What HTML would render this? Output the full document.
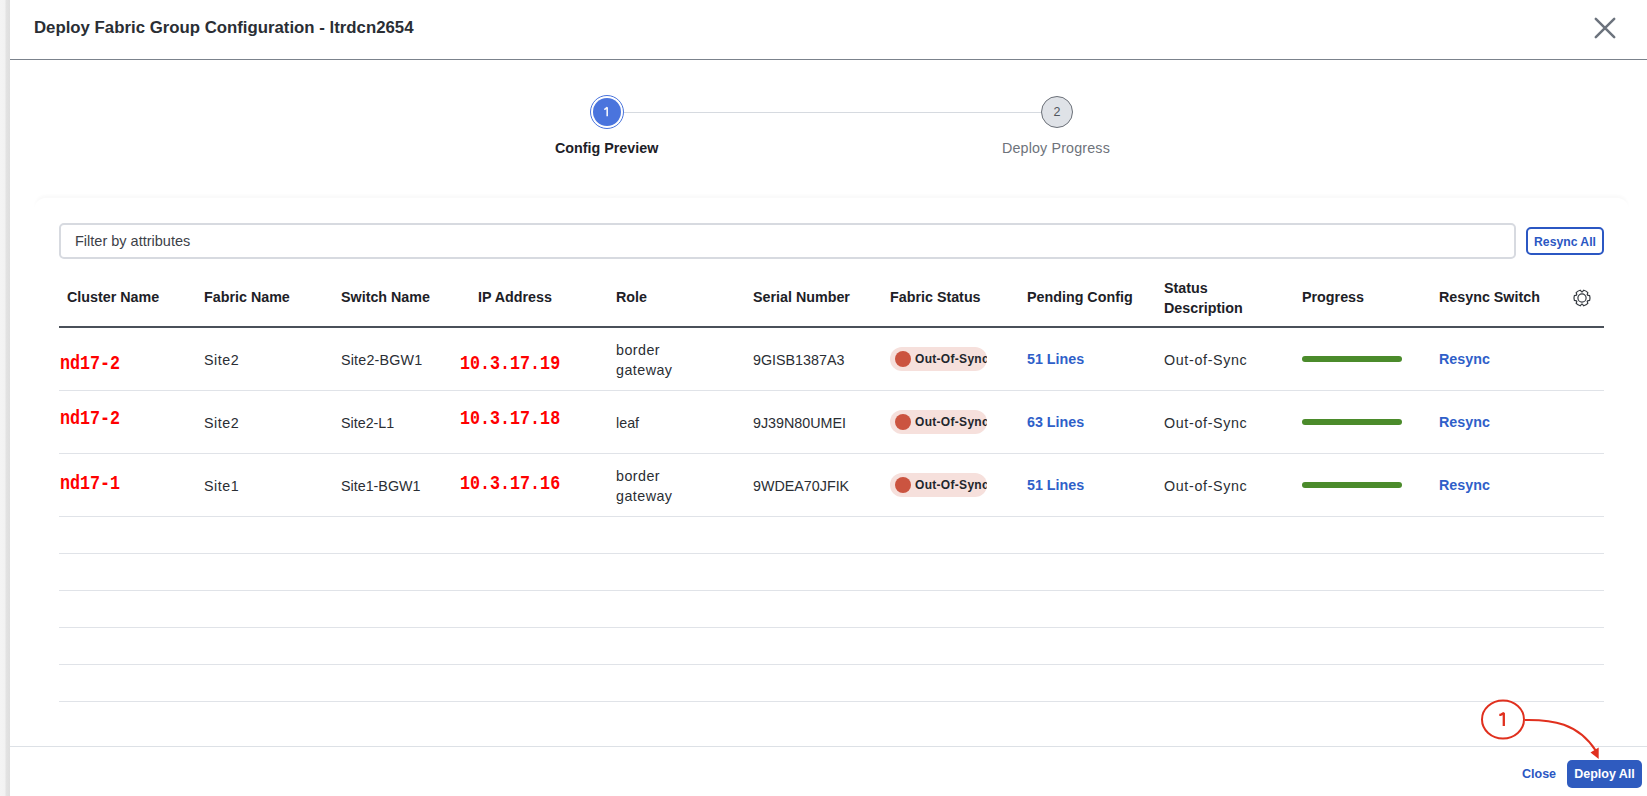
<!DOCTYPE html>
<html><head><meta charset="utf-8">
<style>
*{box-sizing:border-box;margin:0;padding:0}
html,body{width:1647px;height:796px;overflow:hidden;background:#fff;font-family:"Liberation Sans",sans-serif;color:#1d2127}
.strip{position:absolute;left:0;top:0;width:10px;height:796px;background:linear-gradient(to right,#f4f4f4 0,#f2f2f2 5px,#e3e3e3 6px,#dedede 10px)}
.modal{position:absolute;left:10px;top:0;width:1637px;height:796px;background:#fff}
.abs{position:absolute;white-space:nowrap}
.title{left:34px;top:18px;font-size:16.8px;font-weight:bold;color:#2a2e34}
.hline{position:absolute;left:10px;width:1637px;height:1px}
.card{position:absolute;left:34px;top:198px;width:1595px;height:60px;border-radius:12px 12px 0 0;box-shadow:0 -4px 3px -1px rgba(0,0,0,0.022)}
.filter{position:absolute;left:59px;top:223px;width:1457px;height:36px;border:2px solid #d7dae0;border-radius:5px}
.filter span{position:absolute;left:14px;top:8px;font-size:14.5px;color:#3c4148}
.btn-outline{position:absolute;left:1526px;top:227px;width:78px;height:28px;border:2px solid #2b57c3;border-radius:5px;color:#2b57c3;font-weight:bold;font-size:12.2px;text-align:center;line-height:26px}
.th{position:absolute;font-size:14.3px;font-weight:bold;color:#1d2127;white-space:nowrap}
.td{position:absolute;font-size:14.3px;color:#2a2e34;white-space:nowrap}
.mono{position:absolute;font-family:"Liberation Mono",monospace;font-weight:bold;color:#ff0000;font-size:16.7px;transform-origin:left top;transform:scaleY(1.22);white-space:nowrap}
.link{position:absolute;font-size:14.3px;font-weight:bold;color:#2f5fc9;white-space:nowrap}
.pill{position:absolute;left:890px;width:97px;height:24px;border-radius:12px;background:#f6e0dc;overflow:hidden}
.pill i{position:absolute;left:5px;top:4px;width:16px;height:16px;border-radius:50%;background:#cb5440}
.pill b{position:absolute;left:25px;top:4.5px;font-size:12px;color:#22262c;letter-spacing:0.3px;white-space:nowrap}
.bar{position:absolute;left:1302px;width:100px;height:6px;border-radius:3px;background:#4b8b2b}
.rowline{position:absolute;left:59px;width:1545px;height:1px;background:#e0e3e8}
</style></head><body>
<div class="strip"></div>
<div class="modal"></div>
<div class="abs title">Deploy Fabric Group Configuration - ltrdcn2654</div>
<svg class="abs" style="left:1590px;top:13px" width="30" height="30" viewBox="0 0 30 30"><path d="M5.8 5.8 L24.2 24.2 M24.2 5.8 L5.8 24.2" stroke="#6c737d" stroke-width="2.5" stroke-linecap="round"/></svg>
<div class="hline" style="top:59px;background:#7b828c"></div>

<!-- stepper -->
<div style="position:absolute;left:624px;top:112px;width:417px;height:1px;background:#d6dae0"></div>
<div style="position:absolute;left:590px;top:95px;width:34px;height:34px;border-radius:50%;border:1.5px solid #4a74dd;background:#fff"></div>
<div style="position:absolute;left:593px;top:98px;width:28px;height:28px;border-radius:50%;background:#4a74dd"></div>
<svg class="abs" style="left:592px;top:97px" width="30" height="30" viewBox="592 97 30 30"><path d="M607.2 116.2 V107.5 L605 109.2 H604.2" fill="none" stroke="#f2f4fb" stroke-width="1.6" stroke-linejoin="bevel"/></svg>
<div style="position:absolute;left:1041px;top:96px;width:32px;height:32px;border-radius:50%;border:1.3px solid #6b7078;background:#dfe2e7;color:#50555c;font-size:12.5px;text-align:center;line-height:31px">2</div>
<div class="abs" style="left:555px;top:140px;font-size:14.3px;font-weight:bold;color:#1d2127">Config Preview</div>
<div class="abs" style="left:1002px;top:140px;font-size:14.3px;color:#6e737b;letter-spacing:0.15px">Deploy Progress</div>

<div class="card"></div>
<div class="filter"><span>Filter by attributes</span></div>
<div class="btn-outline">Resync All</div>

<!-- header -->
<div class="th" style="left:67px;top:289px">Cluster Name</div>
<div class="th" style="left:204px;top:289px">Fabric Name</div>
<div class="th" style="left:341px;top:289px">Switch Name</div>
<div class="th" style="left:478px;top:289px">IP Address</div>
<div class="th" style="left:616px;top:289px">Role</div>
<div class="th" style="left:753px;top:289px">Serial Number</div>
<div class="th" style="left:890px;top:289px">Fabric Status</div>
<div class="th" style="left:1027px;top:289px">Pending Config</div>
<div class="th" style="left:1164px;top:277.5px;line-height:20px">Status<br>Description</div>
<div class="th" style="left:1302px;top:289px">Progress</div>
<div class="th" style="left:1439px;top:289px">Resync Switch</div>
<svg class="abs" style="left:1572.5px;top:288.6px" width="18" height="18" viewBox="0 0 18 18"><path fill="none" stroke="#33383f" stroke-width="1.2" stroke-linejoin="round" d="M14.52 6.19L16.65 6.66A8.00 8.00 0 0 1 16.65 11.34L14.52 11.81A6.20 6.20 0 0 1 14.20 12.38L14.85 14.46A8.00 8.00 0 0 1 10.80 16.79L9.32 15.19A6.20 6.20 0 0 1 8.68 15.19L7.20 16.79A8.00 8.00 0 0 1 3.15 14.46L3.80 12.38A6.20 6.20 0 0 1 3.48 11.81L1.35 11.34A8.00 8.00 0 0 1 1.35 6.66L3.48 6.19A6.20 6.20 0 0 1 3.80 5.62L3.15 3.54A8.00 8.00 0 0 1 7.20 1.21L8.68 2.81A6.20 6.20 0 0 1 9.32 2.81L10.80 1.21A8.00 8.00 0 0 1 14.85 3.54L14.20 5.62A6.20 6.20 0 0 1 14.52 6.19 Z"/><circle cx="9" cy="9" r="4.1" fill="none" stroke="#33383f" stroke-width="1.2"/></svg>
<div style="position:absolute;left:59px;top:326px;width:1545px;height:2px;background:#4a5059"></div>

<!-- rows -->
<div class="mono" style="left:60px;top:352px">nd17-2</div>
<div class="td" style="left:204px;top:351.5px;letter-spacing:0.5px">Site2</div>
<div class="td" style="left:341px;top:351.5px;letter-spacing:0.2px">Site2-BGW1</div>
<div class="mono" style="left:460px;top:352px">10.3.17.19</div>
<div class="td" style="left:616px;top:340px;line-height:20px;letter-spacing:0.45px">border<br>gateway</div>
<div class="td" style="left:753px;top:351.5px">9GISB1387A3</div>
<div class="pill" style="top:347px"><i></i><b>Out-Of-Sync</b></div>
<div class="link" style="left:1027px;top:351px">51 Lines</div>
<div class="td" style="left:1164px;top:351.5px;letter-spacing:0.65px">Out-of-Sync</div>
<div class="bar" style="top:356px"></div>
<div class="link" style="left:1439px;top:351px">Resync</div>
<div class="rowline" style="top:390px"></div>

<div class="mono" style="left:60px;top:407px">nd17-2</div>
<div class="td" style="left:204px;top:415px;letter-spacing:0.5px">Site2</div>
<div class="td" style="left:341px;top:415px">Site2-L1</div>
<div class="mono" style="left:460px;top:407px">10.3.17.18</div>
<div class="td" style="left:616px;top:415px">leaf</div>
<div class="td" style="left:753px;top:415px">9J39N80UMEI</div>
<div class="pill" style="top:410px"><i></i><b>Out-Of-Sync</b></div>
<div class="link" style="left:1027px;top:414px">63 Lines</div>
<div class="td" style="left:1164px;top:415px;letter-spacing:0.65px">Out-of-Sync</div>
<div class="bar" style="top:419px"></div>
<div class="link" style="left:1439px;top:414px">Resync</div>
<div class="rowline" style="top:453px"></div>

<div class="mono" style="left:60px;top:472px">nd17-1</div>
<div class="td" style="left:204px;top:477.5px;letter-spacing:0.5px">Site1</div>
<div class="td" style="left:341px;top:477.5px">Site1-BGW1</div>
<div class="mono" style="left:460px;top:472px">10.3.17.16</div>
<div class="td" style="left:616px;top:466px;line-height:20px;letter-spacing:0.45px">border<br>gateway</div>
<div class="td" style="left:753px;top:477.5px">9WDEA70JFIK</div>
<div class="pill" style="top:473px"><i></i><b>Out-Of-Sync</b></div>
<div class="link" style="left:1027px;top:477px">51 Lines</div>
<div class="td" style="left:1164px;top:477.5px;letter-spacing:0.65px">Out-of-Sync</div>
<div class="bar" style="top:482px"></div>
<div class="link" style="left:1439px;top:477px">Resync</div>
<div class="rowline" style="top:516px"></div>

<div class="rowline" style="top:553px"></div>
<div class="rowline" style="top:590px"></div>
<div class="rowline" style="top:627px"></div>
<div class="rowline" style="top:664px"></div>
<div class="rowline" style="top:701px"></div>

<!-- footer -->
<div class="hline" style="top:746px;background:#dde1e6"></div>
<div class="abs" style="left:1522px;top:767px;font-size:12.5px;font-weight:bold;color:#2b57c3">Close</div>
<div style="position:absolute;left:1567px;top:760px;width:75px;height:28px;border-radius:5px;background:#2f5bbf;color:#fff;font-weight:bold;font-size:12.5px;text-align:center;line-height:28px">Deploy All</div>

<!-- annotation -->
<svg class="abs" style="left:1470px;top:690px" width="177" height="80" viewBox="1470 690 177 80">
<ellipse cx="1503" cy="719.5" rx="21" ry="19" fill="none" stroke="#e0301e" stroke-width="2"/>
<path d="M1525 720 C1552 719.5 1578 723 1596 751" fill="none" stroke="#e0301e" stroke-width="2"/>
<path d="M1590.5 752.5 L1598.7 747.5 L1598.7 759 Z" fill="#e0301e"/>
<path d="M1503.8 725.9 V712.9 L1500.4 714.9 H1499.3" fill="none" stroke="#e0301e" stroke-width="2.3" stroke-linejoin="bevel"/>
</svg>

</body></html>
